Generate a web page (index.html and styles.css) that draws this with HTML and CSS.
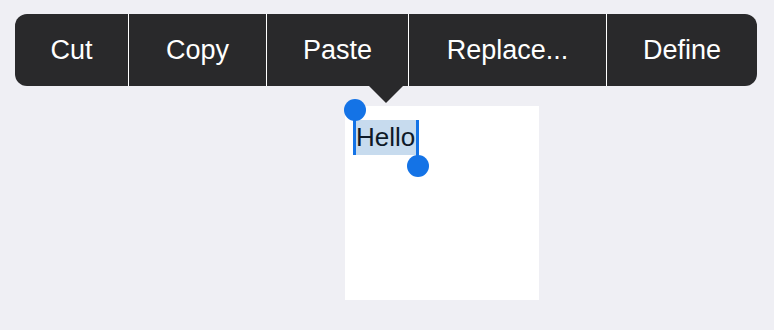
FILE: index.html
```html
<!DOCTYPE html>
<html lang="en">
<head>
  <meta charset="UTF-8">
  <meta name="viewport" content="width=device-width, initial-scale=1.0">
  <title>Edit menu</title>
  <link rel="stylesheet" href="styles.css">
</head>
<body>
  <div class="edit-menu">
    <ul class="menu-items">
      <li class="item-cut">Cut</li>
      <li class="item-copy">Copy</li>
      <li class="item-paste">Paste</li>
      <li class="item-replace">Replace...</li>
      <li class="item-define">Define</li>
    </ul>
    <span class="menu-arrow"></span>
  </div>
  <div class="text-box">
    <span class="selection">Hello<i class="grab grab-start"></i><i class="grab grab-end"></i></span>
  </div>
</body>
</html>
```

FILE: styles.css
```css
body,ul,li{
  margin: 0;
  padding: 0;
  box-sizing: border-box;
}
ul,li{
  list-style: none;
}
body{
  background: #efeff4;
  font-family: "Liberation Sans", Arial, sans-serif;
  width: 774px;
  height: 330px;
  overflow: hidden;
}
.edit-menu{
  position: relative;
  width: 742px;
  margin: 14px 0 0 15px;
}
.menu-items{
  display: flex;
  height: 72px;
  background: #29292b;
  border-radius: 12px;
  overflow: hidden;
}
.menu-items li{
  flex: none;
  display: flex;
  align-items: center;
  justify-content: center;
  color: #fff;
  font-size: 27px;
  border-left: 1px solid #fff;
}
.menu-items li:first-child{
  border-left: none;
}
.item-cut{ width: 113px; }
.item-copy{ width: 138px; }
.item-paste{ width: 142px; }
.item-replace{ width: 198px; }
.item-define{ width: 151px; }
.menu-arrow{
  position: absolute;
  left: 354px;
  top: 100%;
  width: 0;
  height: 0;
  border-left: 17px solid transparent;
  border-right: 17px solid transparent;
  border-top: 17px solid #29292b;
}
.text-box{
  width: 194px;
  height: 194px;
  margin: 20px 0 0 345px;
  padding: 14px 0 0 11px;
  background: #fff;
  box-sizing: border-box;
}
.selection{
  position: relative;
  display: inline-block;
  height: 35px;
  line-height: 35px;
  padding-right: 1px;
  font-size: 26px;
  color: #0e1a28;
  background: #c7dbee;
}
.grab{
  position: absolute;
  width: 3px;
  background: #1473e6;
}
.grab::after{
  content: "";
  position: absolute;
  width: 22px;
  height: 22px;
  border-radius: 50%;
  background: #1473e6;
}
.grab-start{
  left: -3px;
  top: -10px;
  height: 45px;
}
.grab-start::after{
  left: -9px;
  top: -11px;
}
.grab-end{
  right: -3px;
  top: 0;
  height: 46px;
}
.grab-end::after{
  left: -9px;
  top: 35px;
}
```
